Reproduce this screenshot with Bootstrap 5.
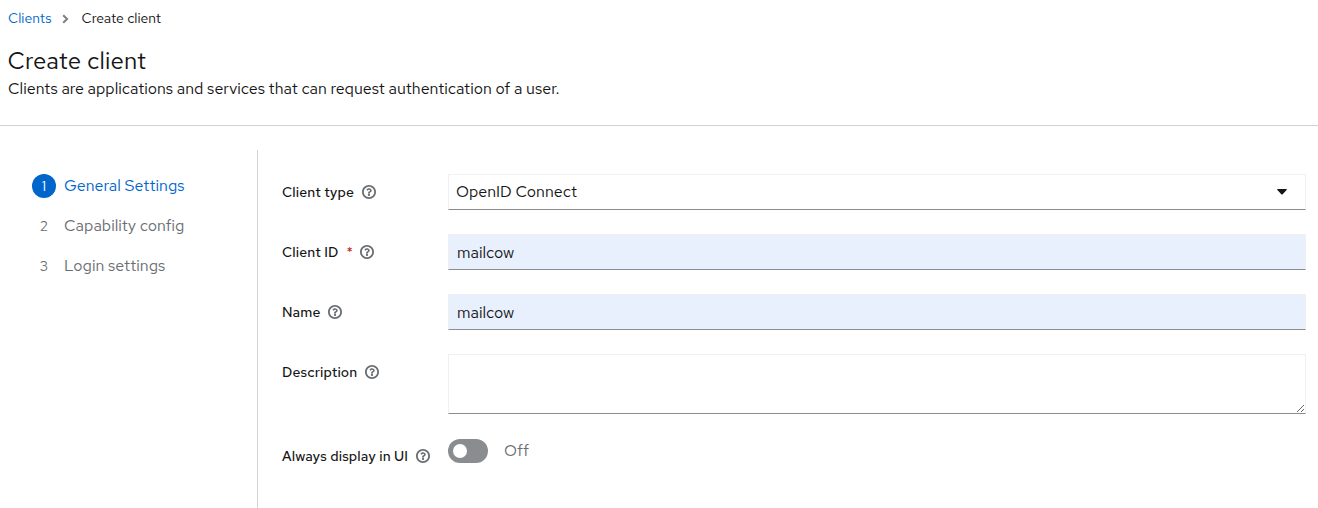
<!DOCTYPE html>
<html lang="en">
<head>
<meta charset="utf-8">
<meta name="viewport" content="width=device-width, initial-scale=1">
<title>Create client</title>
<link rel="stylesheet" href="https://cdn.jsdelivr.net/npm/bootstrap@5.3.0/dist/css/bootstrap.min.css">
<style>
  body { font-family: "Red Hat Text", Inter, "Liberation Sans", sans-serif; font-size: 16px; font-weight: 400; line-height: 24px; color: #151515; background: #fff; height: 508px; overflow: hidden; }
  .page-head { height: 126px; border-bottom: 1px solid #d2d2d2; padding: 8px 8px 0; }
  .breadcrumb { --bs-breadcrumb-margin-bottom: 0; font-size: 14px; line-height: 21px; }
  .breadcrumb a { color: #06c; }
  .crumb-arrow { margin: 0 12px 0 11px; }
  .page-title { font-size: 24px; line-height: 31px; font-weight: 400; letter-spacing: .17px; margin: 16px 0 1px -.5px; }
  .wizard { height: 358px; margin-top: 24px; }
  .steps { width: 258px; border-right: 1px solid #d2d2d2; padding: 24px 0 0 32px; gap: 16px; color: #6a6e73; }
  .step-no { width: 24px; height: 24px; font-size: 14px; }
  .step.active { color: #06c; }
  .step.active .step-no { background: #06c; color: #fff; }
  .settings { padding: 24px 12px 0 24px; gap: 24px; }
  .form-name { width: 166px; flex: none; font-size: 14px; font-weight: 500; letter-spacing: .14px; line-height: 18px; padding-top: 9px; }
  .help { width: 14px; height: 14px; margin: 2px 0 0 8px; fill: #6a6e73; flex: none; }
  .required { color: #c9190b; margin: 0 -1px 0 8px; font-weight: 400; }
  .form-control { height: 36px; padding: 5px 8px; border: 1px solid #f0f0f0; border-bottom-color: #8a8d90; border-radius: 0; font-size: 16px; font-weight: 400; line-height: 24px; color: #151515; }
  .select-box { padding-left: 7px; }
  .select-arrow { margin: 9px 10px 0 0; }
  .filled, .filled:focus { background: #e8f0fe; }
  textarea.form-control { height: 60px; }
  .toggle-row { padding-top: 1px; color: #6a6e73; }
  .toggle { width: 40px; height: 24px; padding: 5px; background: #8a8d90; }
  .knob { width: 14px; height: 14px; background: #fff; }
</style>
</head>
<body>
<header class="page-head">
  <nav aria-label="breadcrumb">
    <div class="breadcrumb align-items-center">
      <a href="#" class="text-decoration-none">Clients</a>
      <svg class="crumb-arrow" width="7" height="10" viewBox="0 0 7 10"><path d="M1.2 1.200 5.100 5 1.2 8.800" fill="none" stroke="#7d8084" stroke-width="2"/></svg>
      <span>Create client</span>
    </div>
  </nav>
  <h1 class="page-title">Create client</h1>
  <p class="mb-0">Clients are applications and services that can request authentication of a user.</p>
</header>
<main class="wizard d-flex">
  <nav class="steps d-flex flex-column flex-shrink-0">
    <div class="step active d-flex gap-2"><span class="step-no rounded-circle text-center">1</span><span>General Settings</span></div>
    <div class="step d-flex gap-2"><span class="step-no text-center">2</span><span>Capability config</span></div>
    <div class="step d-flex gap-2"><span class="step-no text-center">3</span><span>Login settings</span></div>
  </nav>
  <form class="settings d-flex flex-column flex-grow-1">
    <svg class="d-none"><symbol id="help" viewBox="8 8 496 496"><path d="M256 8C119.043 8 8 119.083 8 256c0 136.997 111.043 248 248 248s248-111.003 248-248C504 119.083 392.957 8 256 8zm0 432c-101.7 0-184-82.3-184-184S154.300 72 256 72s184 82.300 184 184-82.300 184-184 184z"/><path transform="translate(20 20) scale(.92)" d="M363.244 200.800c0 67.052-72.421 68.084-72.421 92.863V300c0 6.627-5.373 12-12 12h-45.647c-6.627 0-12-5.373-12-12v-8.659c0-35.745 27.100-50.034 47.579-61.516 17.561-9.845 28.324-16.541 28.324-29.579 0-17.246-21.999-28.693-39.784-28.693-23.189 0-33.894 10.977-48.942 29.969-4.057 5.120-11.460 6.071-16.666 2.124l-27.824-21.098c-5.107-3.872-6.251-11.066-2.644-16.363C184.846 131.491 214.940 112 261.794 112c49.071 0 101.450 38.304 101.450 88.800zM298 368c0 23.159-18.841 42-42 42s-42-18.841-42-42 18.841-42 42-42 42 18.841 42 42z"/></symbol></svg>
    <div class="d-flex">
      <div class="form-name d-flex"><span>Client type</span><svg class="help"><use href="#help"/></svg></div>
      <div class="form-control select-box d-flex justify-content-between"><span>OpenID Connect</span>
        <svg class="select-arrow" width="10" height="6" viewBox="0 0 10 6"><path d="M.7 0h8.600q.900.200.300 1L5.700 5.200q-.700.600-1.400 0L.4 1Q-.2.200.7 0z" fill="#151515"/></svg></div>
    </div>
    <div class="d-flex">
      <div class="form-name d-flex"><span>Client ID</span><span class="required">*</span><svg class="help"><use href="#help"/></svg></div>
      <input class="form-control filled" value="mailcow" aria-label="Client ID">
    </div>
    <div class="d-flex">
      <div class="form-name d-flex"><span>Name</span><svg class="help"><use href="#help"/></svg></div>
      <input class="form-control filled" value="mailcow" aria-label="Name">
    </div>
    <div class="d-flex">
      <div class="form-name d-flex"><span>Description</span><svg class="help"><use href="#help"/></svg></div>
      <textarea class="form-control" aria-label="Description"></textarea>
    </div>
    <div class="d-flex">
      <div class="form-name d-flex"><span>Always display in UI</span><svg class="help"><use href="#help"/></svg></div>
      <div class="toggle-row d-flex"><span class="toggle rounded-pill"><span class="knob rounded-circle d-block"></span></span><span class="ms-3">Off</span></div>
    </div>
  </form>
</main>
<script src="https://cdn.jsdelivr.net/npm/bootstrap@5.3.0/dist/js/bootstrap.bundle.min.js"></script>
</body>
</html>
